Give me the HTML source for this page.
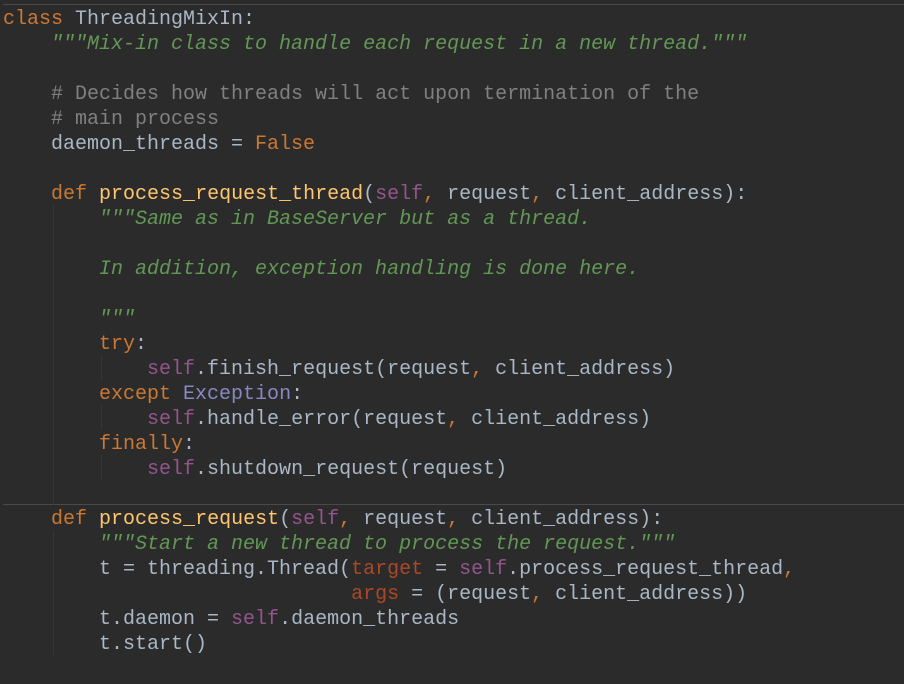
<!DOCTYPE html>
<html><head><style>
body{margin:0;background:#2b2b2b;width:904px;height:684px;overflow:hidden;position:relative}
pre{margin:0;position:absolute;left:3px;top:7px;font-family:"Liberation Mono",monospace;font-size:20px;line-height:25px;color:#a9b7c6;letter-spacing:0}
.k{color:#cc7832}.d{color:#629755;font-style:italic}.s{color:#94558d}.f{color:#ffc66d}.c{color:#808080}.e{color:#8888c6}.p{color:#aa4926}
.sep{position:absolute;left:3px;right:0;height:1px;background:#4a4a4a}
.g{position:absolute;width:1px;background:#363636}
</style></head><body>
<div class="sep" style="top:4px"></div>
<div class="sep" style="top:504px"></div>
<div class="g" style="left:53px;top:205px;height:300px"></div>
<div class="g" style="left:101px;top:355px;height:25px"></div>
<div class="g" style="left:101px;top:405px;height:25px"></div>
<div class="g" style="left:101px;top:455px;height:25px"></div>
<div class="g" style="left:53px;top:530px;height:125px"></div>
<pre><span class="k">class</span> ThreadingMixIn:
    <span class="d">"""Mix-in class to handle each request in a new thread."""</span>

    <span class="c"># Decides how threads will act upon termination of the</span>
    <span class="c"># main process</span>
    daemon_threads = <span class="k">False</span>

    <span class="k">def</span> <span class="f">process_request_thread</span>(<span class="s">self</span><span class="k">,</span> request<span class="k">,</span> client_address):
        <span class="d">"""Same as in BaseServer but as a thread.

        In addition, exception handling is done here.

        """</span>
        <span class="k">try</span>:
            <span class="s">self</span>.finish_request(request<span class="k">,</span> client_address)
        <span class="k">except</span> <span class="e">Exception</span>:
            <span class="s">self</span>.handle_error(request<span class="k">,</span> client_address)
        <span class="k">finally</span>:
            <span class="s">self</span>.shutdown_request(request)

    <span class="k">def</span> <span class="f">process_request</span>(<span class="s">self</span><span class="k">,</span> request<span class="k">,</span> client_address):
        <span class="d">"""Start a new thread to process the request."""</span>
        t = threading.Thread(<span class="p">target</span> = <span class="s">self</span>.process_request_thread<span class="k">,</span>
                             <span class="p">args</span> = (request<span class="k">,</span> client_address))
        t.daemon = <span class="s">self</span>.daemon_threads
        t.start()
</pre>
</body></html>
